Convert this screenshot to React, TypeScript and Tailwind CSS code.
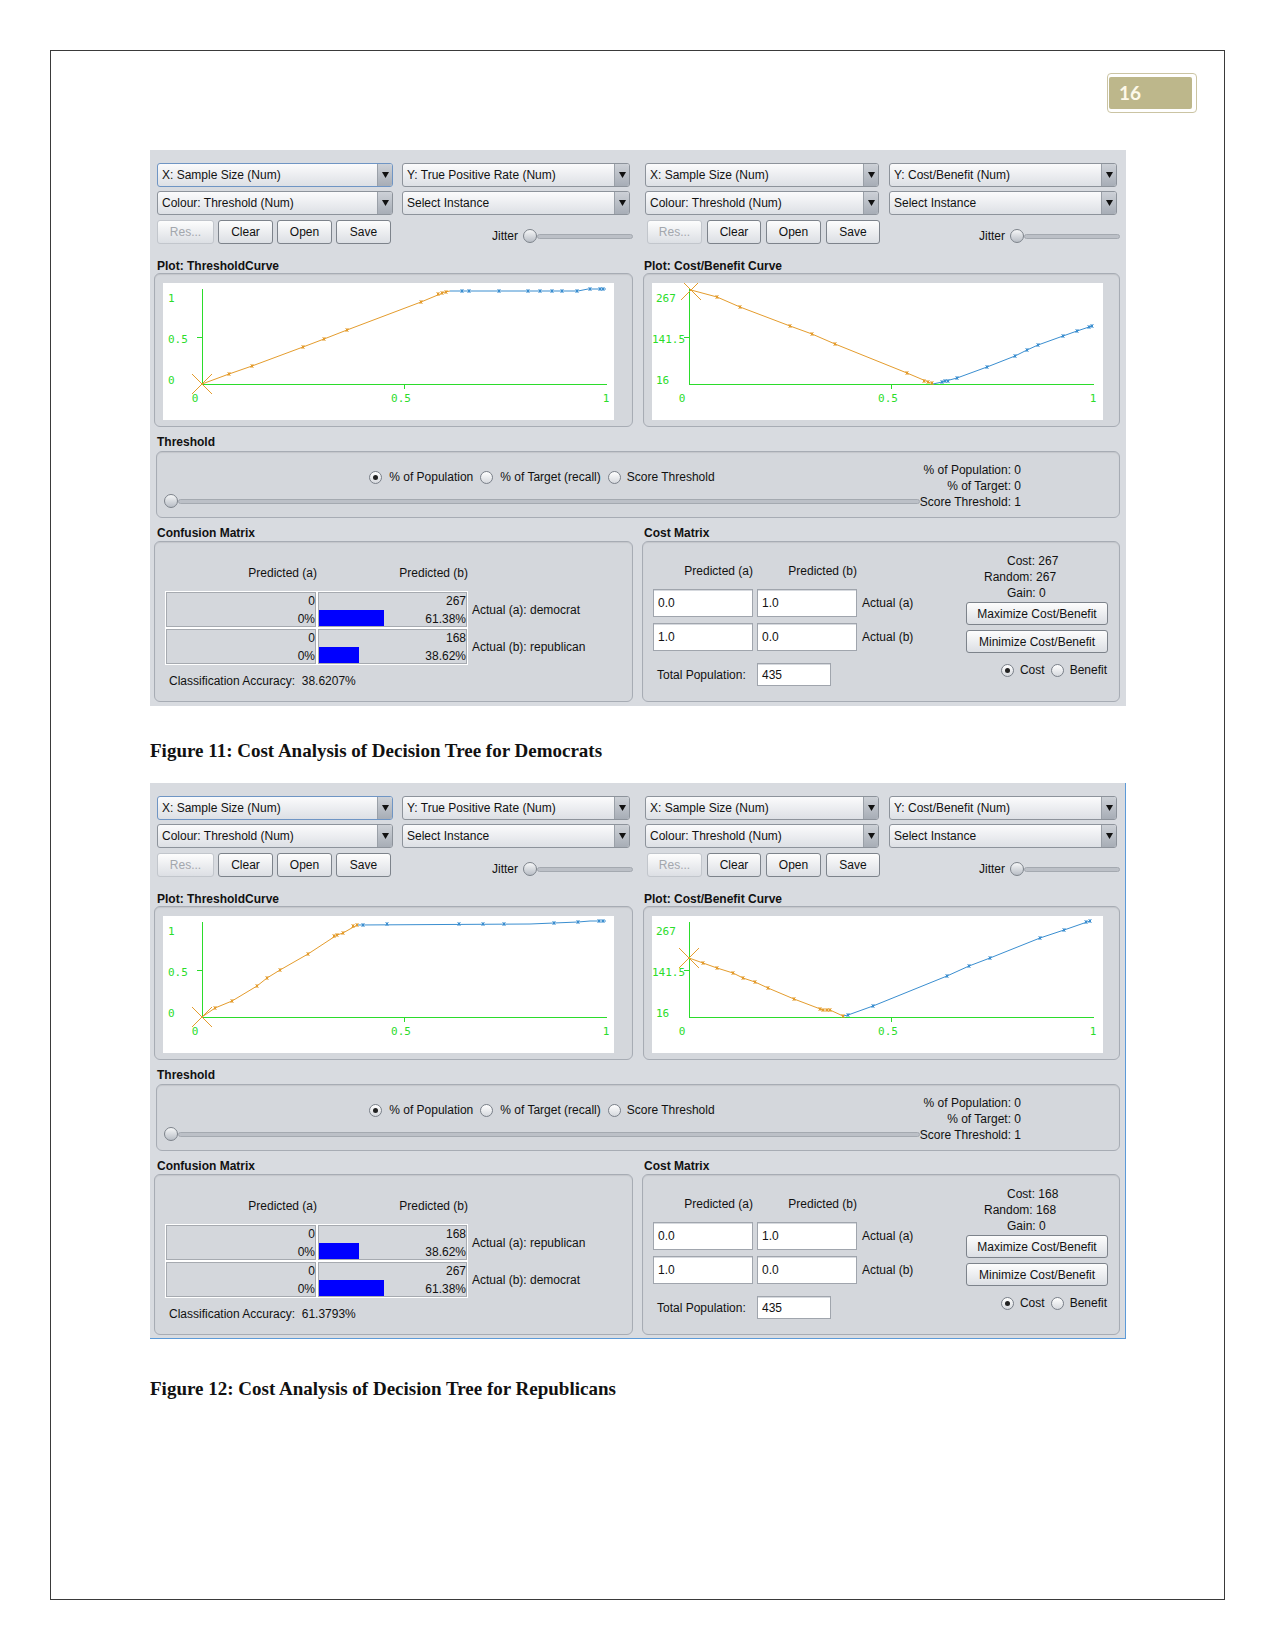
import { FC } from "react";

type Pt = [number, number];

type PlotData = {
  ox: number;
  x1: number;
  yLabels: { t: string; x: number; y: number }[];
  orange: Pt[];
  blue: Pt[];
  oMarks: Pt[];
  bMarks: Pt[];
  big: Pt;
};

type Row = { label: string; count: string; pct: string; bar: number };

type FigData = {
  left: PlotData;
  right: PlotData;
  rows: Row[];
  accuracy: string;
  cost: string;
  blueEdge?: boolean;
};

const GREEN = "#2bdc2b";
const ORANGE = "#e49c2d";
const BLUE = "#3a8ed0";

const UI = "font-['Liberation_Sans',Arial,sans-serif] text-[12px] text-[#111]";
const FRAME =
  "rounded-[6px] border border-[#a7acb4] bg-[#d4d7dc] shadow-[inset_0_1px_1px_rgba(0,0,0,0.08)]";

const fig1: FigData = {
  left: {
    ox: 39,
    x1: 443,
    yLabels: [
      { t: "1", x: 5, y: 15 },
      { t: "0.5", x: 5, y: 56 },
      { t: "0", x: 5, y: 97 },
    ],
    orange: [[39, 101], [66, 91], [89, 83], [140, 64], [161, 56], [184, 47], [258, 19], [282, 9], [287, 8]],
    blue: [[287, 8], [300, 8], [415, 8], [425, 6], [443, 6]],
    oMarks: [[66, 91], [89, 83], [140, 64], [161, 56], [184, 47], [258, 19], [275, 11], [279, 10], [283, 9]],
    bMarks: [[299, 8], [306, 8], [336, 8], [365, 8], [377, 8], [389, 8], [399, 8], [414, 8], [427, 6], [437, 6], [440, 6]],
    big: [39, 101],
  },
  right: {
    ox: 37,
    x1: 441,
    yLabels: [
      { t: "267", x: 4, y: 15 },
      { t: "141.5", x: 0, y: 56 },
      { t: "16", x: 4, y: 97 },
    ],
    orange: [[39, 7], [65, 14], [88, 24], [138, 43], [160, 51], [183, 61], [255, 90], [281, 101]],
    blue: [[281, 101], [290, 99], [305, 95], [335, 84], [363, 73], [375, 67], [386, 62], [411, 53], [425, 48], [440, 43]],
    oMarks: [[65, 14], [88, 24], [138, 43], [160, 51], [183, 61], [255, 90], [272, 98], [276, 99], [280, 100]],
    bMarks: [[290, 99], [293, 98], [296, 98], [305, 95], [335, 84], [363, 73], [375, 67], [386, 62], [411, 53], [425, 48], [437, 44], [440, 43]],
    big: [39, 7],
  },
  rows: [
    { label: "Actual (a): democrat", count: "267", pct: "61.38%", bar: 65 },
    { label: "Actual (b): republican", count: "168", pct: "38.62%", bar: 40 },
  ],
  accuracy: "38.6207%",
  cost: "267",
};

const fig2: FigData = {
  left: {
    ox: 39,
    x1: 443,
    yLabels: fig1.left.yLabels,
    orange: [[39, 101], [52, 92], [69, 85], [94, 70], [104, 62], [117, 54], [145, 38], [174, 19], [180, 17], [194, 9]],
    blue: [[194, 9], [367, 8], [391, 7], [415, 6], [427, 5], [443, 5]],
    oMarks: [[52, 92], [69, 85], [94, 70], [104, 62], [117, 54], [145, 38], [171, 20], [174, 19], [180, 17], [190, 10], [194, 9]],
    bMarks: [[200, 9], [224, 8], [296, 8], [320, 8], [341, 8], [391, 7], [415, 6], [436, 5], [440, 5]],
    big: [39, 101],
  },
  right: {
    ox: 37,
    x1: 441,
    yLabels: fig1.right.yLabels,
    orange: [[37, 42], [51, 47], [65, 52], [81, 57], [91, 62], [103, 66], [116, 72], [142, 83], [171, 94], [178, 94], [191, 100]],
    blue: [[191, 100], [196, 99], [221, 90], [295, 60], [317, 50], [338, 42], [388, 22], [412, 14], [438, 5]],
    oMarks: [[51, 47], [65, 52], [81, 57], [91, 62], [103, 66], [116, 72], [142, 83], [168, 93], [171, 94], [175, 94], [178, 94], [191, 100]],
    bMarks: [[196, 99], [221, 90], [295, 60], [317, 50], [338, 42], [388, 22], [412, 14], [434, 6], [438, 5]],
    big: [37, 42],
  },
  rows: [
    { label: "Actual (a): republican", count: "168", pct: "38.62%", bar: 40 },
    { label: "Actual (b): democrat", count: "267", pct: "61.38%", bar: 65 },
  ],
  accuracy: "61.3793%",
  cost: "168",
  blueEdge: true,
};

const Plot: FC<{ p: PlotData }> = ({ p }) => {
  const mid = (p.ox + p.x1) / 2;
  const line = (pts: Pt[]) => pts.map((q) => q.join(",")).join(" ");
  // weka draws each point as a tiny tick cross
  const marks = (pts: Pt[]) =>
    pts
      .map(([x, y]) => `M${x - 1.5} ${y - 1.5}L${x + 1.5} ${y + 1.5}M${x - 1.5} ${y + 1.5}L${x + 1.5} ${y - 1.5}M${x} ${y - 2}V${y + 2}`)
      .join("");
  const [bx, by] = p.big;
  return (
    <svg width="451" height="137" viewBox="0 0 451 137" className="block bg-white">
      <g stroke={GREEN} strokeWidth="1" fill="none" shapeRendering="crispEdges">
        <line x1={p.ox + 0.5} y1={6} x2={p.ox + 0.5} y2={101.5} />
        <line x1={p.ox} y1={101.5} x2={p.x1 + 1} y2={101.5} />
        <line x1={p.ox - 5} y1={54.5} x2={p.ox} y2={54.5} />
        <line x1={mid + 0.5} y1={101} x2={mid + 0.5} y2={106} />
      </g>
      <g fill={GREEN} fontFamily="'DejaVu Sans Mono', monospace" fontSize="11">
        {p.yLabels.map((l) => (
          <text key={l.t} x={l.x} y={l.y} dominantBaseline="central">
            {l.t}
          </text>
        ))}
        <text x={p.ox - 7} y={115} textAnchor="middle" dominantBaseline="central">0</text>
        <text x={mid - 3} y={115} textAnchor="middle" dominantBaseline="central">0.5</text>
        <text x={p.x1} y={115} textAnchor="middle" dominantBaseline="central">1</text>
      </g>
      <polyline points={line(p.orange)} stroke={ORANGE} fill="none" />
      <polyline points={line(p.blue)} stroke={BLUE} fill="none" />
      <path d={marks(p.oMarks)} stroke={ORANGE} />
      <path d={marks(p.bMarks)} stroke={BLUE} />
      <path d={`M${bx - 10} ${by - 10}L${bx + 10} ${by + 10}M${bx - 10} ${by + 10}L${bx + 10} ${by - 10}`} stroke={ORANGE} />
    </svg>
  );
};

const Combo: FC<{ label: string; w: string; focus?: boolean }> = ({ label, w, focus }) => (
  <div
    className={`flex h-[24px] items-stretch overflow-hidden rounded-[3px] border bg-linear-to-b from-[#fbfbfc] to-[#dde0e5] ${
      focus ? "border-[#6f95c4]" : "border-[#8d939b]"
    } ${w}`}
  >
    <span className="flex-1 truncate pl-[4px] leading-[22px]">{label}</span>
    <span className="flex w-[15px] items-center justify-center border-l border-[#9aa0a8] bg-linear-to-b from-[#cdd1d7] to-[#a7adb6]">
      <svg width="7" height="6" viewBox="0 0 7 6">
        <path d="M0 0H7L3.5 6Z" fill="#111" />
      </svg>
    </span>
  </div>
);

const Btn: FC<{ label: string; w: string; h?: string; disabled?: boolean }> = ({ label, w, h = "h-[24px]", disabled }) => (
  <div
    className={`flex items-center justify-center rounded-[3px] border bg-linear-to-b from-[#fdfdfd] to-[#dcdfe4] ${
      disabled ? "border-[#c2c6cc] text-[#a3a7ad]" : "border-[#7d838b]"
    } ${w} ${h}`}
  >
    {label}
  </div>
);

const Thumb = () => (
  <div className="h-[14px] w-[14px] shrink-0 rounded-full border border-[#7d838b] bg-linear-to-b from-[#f6f7f8] to-[#b9bec6]" />
);

const Track: FC<{ w?: string }> = ({ w = "flex-1" }) => (
  <div className={`h-[5px] rounded-full border border-[#a4a9b0] bg-[#bcc0c7] ${w}`} />
);

const Radio: FC<{ on?: boolean }> = ({ on }) => (
  <div className="flex h-[13px] w-[13px] shrink-0 items-center justify-center rounded-full border border-[#7a8089] bg-linear-to-b from-white to-[#d6d9de]">
    {on && <div className="h-[5px] w-[5px] rounded-full bg-[#222]" />}
  </div>
);

const Field: FC<{ v: string; w?: string; h?: string }> = ({ v, w = "w-[100px]", h = "h-[28px]" }) => (
  <div className={`flex items-center border border-[#a0a5ad] bg-white pl-[4px] shadow-[inset_0_1px_0_#d6d9de] ${w} ${h}`}>
    {v}
  </div>
);

const TopCol: FC<{ yLabel: string; title: string; plot: PlotData; right?: boolean }> = ({ yLabel, title, plot, right }) => (
  <div className={right ? "w-[477px]" : "w-[479px]"}>
    <div className={`flex ${right ? "gap-[10px] pl-[2px]" : "gap-[9px] pl-[3px]"}`}>
      <Combo w={right ? "w-[234px]" : "w-[236px]"} label="X: Sample Size (Num)" focus={!right} />
      <Combo w="w-[228px]" label={yLabel} />
    </div>
    <div className={`mt-[4px] flex ${right ? "gap-[10px] pl-[2px]" : "gap-[9px] pl-[3px]"}`}>
      <Combo w={right ? "w-[234px]" : "w-[236px]"} label="Colour: Threshold (Num)" />
      <Combo w="w-[228px]" label="Select Instance" />
    </div>
    <div className={`mt-[5px] flex ${right ? "gap-[5px] pl-[4px]" : "gap-[4px] pl-[3px]"}`}>
      <Btn w={right ? "w-[55px]" : "w-[57px]"} label="Res..." disabled />
      <Btn w={right ? "w-[54px]" : "w-[55px]"} label="Clear" />
      <Btn w="w-[55px]" label="Open" />
      <Btn w={right ? "w-[54px]" : "w-[55px]"} label="Save" />
      <div className="ml-auto mt-[9px] flex h-[14px] items-center">
        <span className="leading-[14px]">Jitter</span>
        <div className="ml-[5px]">
          <Thumb />
        </div>
        <Track w="w-[96px]" />
      </div>
    </div>
    <div className={`mt-[15px] font-bold leading-[14px] ${right ? "pl-[1px]" : "pl-[3px]"}`}>{title}</div>
    <div className={`h-[154px] pl-[8px] pt-[9px] ${FRAME}`}>
      <Plot p={plot} />
    </div>
  </div>
);

const Figure: FC<{ d: FigData }> = ({ d }) => (
  <div
    className={`h-[556px] w-[976px] bg-[#d8dbe0] pl-[4px] pt-[13px] ${UI} ${
      d.blueEdge ? "border-r border-b border-[#5c9ad8]" : ""
    }`}
  >
    <div className="flex gap-[10px]">
      <TopCol yLabel="Y: True Positive Rate (Num)" title="Plot: ThresholdCurve" plot={d.left} />
      <TopCol yLabel="Y: Cost/Benefit (Num)" title="Plot: Cost/Benefit Curve" plot={d.right} right />
    </div>

    {/* threshold */}
    <div className="mt-[8px] pl-[3px] font-bold leading-[14px]">Threshold</div>
    <div className={`ml-[2px] mt-[2px] flex h-[67px] w-[964px] pl-[7px] pr-[98px] ${FRAME}`}>
      <div className="flex flex-1 flex-col pt-[17px]">
        <div className="flex h-[16px] items-center justify-center">
          <Radio on />
          <span className="ml-[7px]">% of Population</span>
          <div className="ml-[7px]">
            <Radio />
          </div>
          <span className="ml-[7px]">% of Target (recall)</span>
          <div className="ml-[7px]">
            <Radio />
          </div>
          <span className="ml-[6px]">Score Threshold</span>
        </div>
        <div className="mt-[9px] flex items-center">
          <Thumb />
          <Track />
        </div>
      </div>
      <div className="whitespace-nowrap pt-[10px] text-right leading-[16px]">
        <div>% of Population: 0</div>
        <div>% of Target: 0</div>
        <div>Score Threshold: 1</div>
      </div>
    </div>

    {/* matrices */}
    <div className="mt-[8px] flex gap-[9px]">
      <div className="w-[479px]">
        <div className="pl-[3px] font-bold leading-[14px]">Confusion Matrix</div>
        <div className={`mt-[1px] h-[161px] pl-[10px] pt-[23px] ${FRAME}`}>
          <div className="flex leading-[16px]">
            <div className="w-[152px] text-right">Predicted (a)</div>
            <div className="w-[151px] text-right">Predicted (b)</div>
          </div>
          <div className="mt-[10px]">
            {d.rows.map((r) => (
              <div key={r.label} className="flex items-center">
                <div className="h-[37px] w-[152px] border border-white pr-[1px] text-right leading-[18px] shadow-[inset_0_0_0_1px_#a6aab0]">
                  <div>0</div>
                  <div>0%</div>
                </div>
                <div className="flex h-[37px] w-[151px] items-end border border-white pr-[1px] leading-[18px] shadow-[inset_0_0_0_1px_#a6aab0]">
                  <div className="mb-[1px] ml-[1px] h-[16px] bg-[#0000ff]" style={{ width: r.bar }} />
                  <div className="mb-[-1px] flex-1 self-stretch text-right">
                    <div>{r.count}</div>
                    <div>{r.pct}</div>
                  </div>
                </div>
                <span className="ml-[4px]">{r.label}</span>
              </div>
            ))}
          </div>
          <div className="mt-[8px] pl-[4px] leading-[16px]">Classification Accuracy:&nbsp;&nbsp;{d.accuracy}</div>
        </div>
      </div>

      <div className="w-[478px]">
        <div className="pl-[2px] font-bold leading-[14px]">Cost Matrix</div>
        <div className={`mt-[1px] flex h-[161px] ${FRAME}`}>
          <div className="w-[323px] pl-[10px] pt-[21px]">
            <div className="flex gap-[4px] leading-[16px]">
              <div className="w-[100px] pr-[-2px] text-right">Predicted (a)</div>
              <div className="w-[100px] text-right">Predicted (b)</div>
            </div>
            <div className="mt-[10px] flex items-center gap-[4px]">
              <Field v="0.0" />
              <Field v="1.0" />
              <span className="ml-[1px]">Actual (a)</span>
            </div>
            <div className="mt-[6px] flex items-center gap-[4px]">
              <Field v="1.0" />
              <Field v="0.0" />
              <span className="ml-[1px]">Actual (b)</span>
            </div>
            <div className="mt-[12px] flex items-center gap-[4px]">
              <span className="w-[100px] pl-[4px]">Total Population:</span>
              <Field v="435" w="w-[74px]" h="h-[23px]" />
            </div>
          </div>
          <div className="w-[142px] pt-[11px] leading-[16px]">
            <div className="pl-[41px]">Cost: {d.cost}</div>
            <div className="pl-[18px]">Random: {d.cost}</div>
            <div className="pl-[41px]">Gain: 0</div>
            <div className="mt-[1px]">
              <Btn w="w-[142px]" h="h-[23px]" label="Maximize Cost/Benefit" />
            </div>
            <div className="mt-[5px]">
              <Btn w="w-[142px]" h="h-[23px]" label="Minimize Cost/Benefit" />
            </div>
            <div className="mt-[9px] flex h-[16px] items-center justify-end pr-[1px]">
              <Radio on />
              <span className="ml-[6px]">Cost</span>
              <div className="ml-[6px]">
                <Radio />
              </div>
              <span className="ml-[6px]">Benefit</span>
            </div>
          </div>
        </div>
      </div>
    </div>
  </div>
);

const Caption: FC<{ text: string; mt: string }> = ({ text, mt }) => (
  <p className={`font-['Liberation_Serif','Times_New_Roman',serif] text-[19px] font-bold leading-[22px] text-[#111] ${mt}`}>
    {text}
  </p>
);

export default function App() {
  return (
    <div className="min-h-[1650px] w-[1275px] bg-white pl-[50px] pt-[50px]">
      <div className="h-[1550px] w-[1175px] border border-[#3a3a3a] pl-[99px]">
        <div className="flex justify-end pr-[27px] pt-[22px]">
          <div className="flex h-[40px] w-[90px] rounded-[4px] border border-[#cbc4a3] py-[3px] pl-[1px] pr-[4px]">
            <div className="flex flex-1 items-center rounded-[2px] bg-[#bdb78b] pl-[10px] font-['Lato',sans-serif] text-[19px] font-bold text-[#fdf9e9]">
              16
            </div>
          </div>
        </div>
        <div className="mt-[37px]">
          <Figure d={fig1} />
        </div>
        <Caption mt="mt-[34px]" text="Figure 11: Cost Analysis of Decision Tree for Democrats" />
        <div className="mt-[21px]">
          <Figure d={fig2} />
        </div>
        <Caption mt="mt-[39px]" text="Figure 12: Cost Analysis of Decision Tree for Republicans" />
      </div>
    </div>
  );
}
